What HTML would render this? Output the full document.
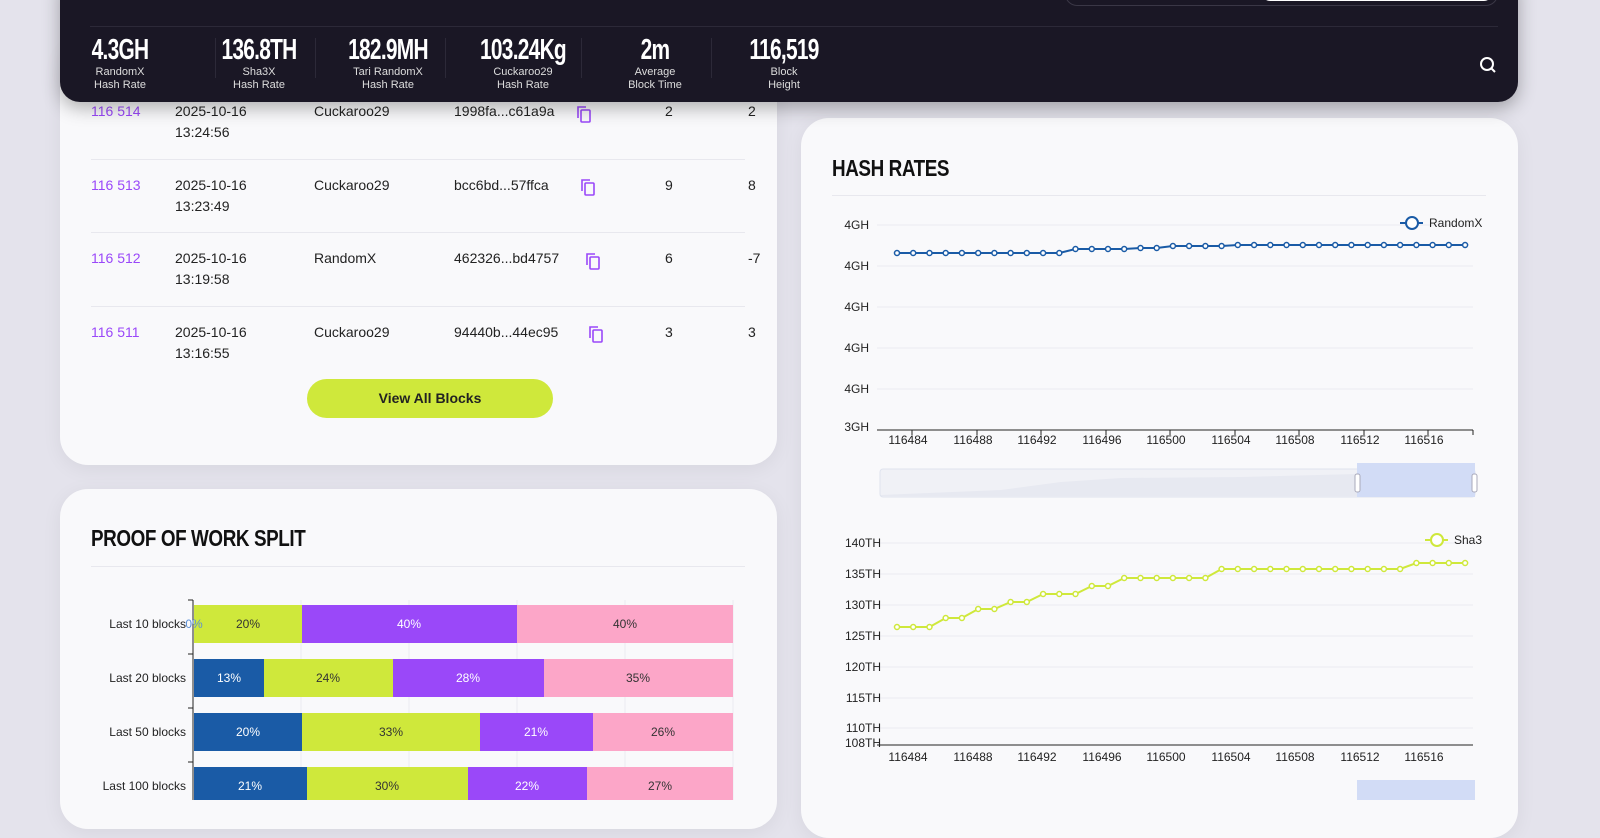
<!DOCTYPE html>
<html><head><meta charset="utf-8"><style>
*{margin:0;padding:0;box-sizing:border-box}
body{width:1600px;height:800px;overflow:hidden;background:#e4e3ec;font-family:"Liberation Sans",sans-serif;position:relative}
.card{position:absolute;background:#f9f9fb;border-radius:28px;box-shadow:0 4px 20px rgba(0,0,0,.06)}
.hdr{position:absolute;left:60px;top:-20px;width:1458px;height:122px;background:#1a1725;border-radius:0 0 20px 20px;box-shadow:0 6px 18px rgba(0,0,0,.3)}
.stat{position:absolute;top:56px;text-align:center;color:#fff;width:130px}
.stat b{display:block;font-family:"Liberation Sans",sans-serif;font-weight:bold;font-size:29px;letter-spacing:-1px;transform:scaleX(.72);line-height:28px;white-space:nowrap}
.stat span{display:block;font-size:11px;line-height:13px;color:#ddd;margin-top:2px}
.sep{position:absolute;top:58px;width:1px;height:40px;background:#2c2938}
.row{position:absolute;left:91px;width:680px;height:45px;font-size:14px;color:#222;line-height:21px;white-space:nowrap}
.row .id{position:absolute;left:0;color:#9a48f9}
.row .d{position:absolute;left:84px}
.row .a{position:absolute;left:223px}
.row .h{position:absolute;left:363px}
.row .n1{position:absolute;left:574px}
.row .n2{position:absolute;left:657px}
.line{position:absolute;left:91px;width:654px;height:1px;background:#e8e8ee}
h2{position:absolute;font-size:23px;font-weight:bold;letter-spacing:-.5px;transform:scaleX(.82);transform-origin:left;color:#111;white-space:nowrap}
</style></head><body>
<div class="card" style="left:60px;top:40px;width:717px;height:425px"></div>
<div class="card" style="left:60px;top:489px;width:717px;height:340px"></div>
<div class="card" style="left:801px;top:118px;width:717px;height:720px"></div>

<div class="row" style="top:101px"><span class="id">116 514</span><span class="d">2025-10-16<br>13:24:56</span><span class="a">Cuckaroo29</span><span class="h">1998fa...c61a9a</span><span class="n1">2</span><span class="n2">2</span></div>
<div class="line" style="top:159px"></div>
<div class="row" style="top:175px"><span class="id">116 513</span><span class="d">2025-10-16<br>13:23:49</span><span class="a">Cuckaroo29</span><span class="h">bcc6bd...57ffca</span><span class="n1">9</span><span class="n2">8</span></div>
<div class="line" style="top:232px"></div>
<div class="row" style="top:248px"><span class="id">116 512</span><span class="d">2025-10-16<br>13:19:58</span><span class="a">RandomX</span><span class="h">462326...bd4757</span><span class="n1">6</span><span class="n2">-7</span></div>
<div class="line" style="top:306px"></div>
<div class="row" style="top:322px"><span class="id">116 511</span><span class="d">2025-10-16<br>13:16:55</span><span class="a">Cuckaroo29</span><span class="h">94440b...44ec95</span><span class="n1">3</span><span class="n2">3</span></div>
<svg style="position:absolute;left:0;top:0" width="800" height="360">
<g fill="none" stroke="#9a48f9" stroke-width="1.6">
<rect x="581" y="110" width="9" height="12" rx="1"/><path d="M578 118V107h8"/>
<rect x="585" y="183" width="9" height="12" rx="1"/><path d="M582 191V180h8"/>
<rect x="590" y="257" width="9" height="12" rx="1"/><path d="M587 265V254h8"/>
<rect x="593" y="330" width="9" height="12" rx="1"/><path d="M590 338V327h8"/>
</g></svg>
<div style="position:absolute;left:307px;top:379px;width:246px;height:39px;border-radius:20px;background:#cfe83b;text-align:center;line-height:39px;font-size:14px;font-weight:bold;color:#222">View All Blocks</div>

<h2 style="left:91px;top:525px">PROOF OF WORK SPLIT</h2>
<div class="line" style="top:566px"></div>
<svg style="position:absolute;left:60px;top:580px" width="717" height="220" font-family="Liberation Sans" font-size="12">
<g stroke="#ececf2"><line x1="241" y1="20" x2="241" y2="220"/><line x1="349" y1="20" x2="349" y2="220"/><line x1="457" y1="20" x2="457" y2="220"/><line x1="565" y1="20" x2="565" y2="220"/><line x1="673" y1="20" x2="673" y2="220"/></g>
<line x1="133" y1="20" x2="133" y2="220" stroke="#222"/>
<g stroke="#222"><line x1="128" y1="20" x2="133" y2="20"/><line x1="128" y1="74" x2="133" y2="74"/><line x1="128" y1="128" x2="133" y2="128"/><line x1="128" y1="182" x2="133" y2="182"/></g>
<g>
<rect x="134" y="25" width="108" height="38" fill="#cfe83b"/><rect x="242" y="25" width="215" height="38" fill="#9a48f9"/><rect x="457" y="25" width="216" height="38" fill="#fca6c8"/>
<rect x="134" y="79" width="70" height="38" fill="#1a5ba6"/><rect x="204" y="79" width="129" height="38" fill="#cfe83b"/><rect x="333" y="79" width="151" height="38" fill="#9a48f9"/><rect x="484" y="79" width="189" height="38" fill="#fca6c8"/>
<rect x="134" y="133" width="108" height="38" fill="#1a5ba6"/><rect x="242" y="133" width="178" height="38" fill="#cfe83b"/><rect x="420" y="133" width="113" height="38" fill="#9a48f9"/><rect x="533" y="133" width="140" height="38" fill="#fca6c8"/>
<rect x="134" y="187" width="113" height="38" fill="#1a5ba6"/><rect x="247" y="187" width="161" height="38" fill="#cfe83b"/><rect x="408" y="187" width="119" height="38" fill="#9a48f9"/><rect x="527" y="187" width="146" height="38" fill="#fca6c8"/>
</g>
<g text-anchor="end" fill="#222"><text x="126" y="48">Last 10 blocks</text><text x="126" y="102">Last 20 blocks</text><text x="126" y="156">Last 50 blocks</text><text x="126" y="210">Last 100 blocks</text></g>
<g text-anchor="middle" fill="#333">
<text x="134" y="48" fill="#5a8fd6">0%</text><text x="188" y="48">20%</text><text x="349" y="48" fill="#fff">40%</text><text x="565" y="48">40%</text>
<text x="169" y="102" fill="#fff">13%</text><text x="268" y="102">24%</text><text x="408" y="102" fill="#fff">28%</text><text x="578" y="102">35%</text>
<text x="188" y="156" fill="#fff">20%</text><text x="331" y="156">33%</text><text x="476" y="156" fill="#fff">21%</text><text x="603" y="156">26%</text>
<text x="190" y="210" fill="#fff">21%</text><text x="327" y="210">30%</text><text x="467" y="210" fill="#fff">22%</text><text x="600" y="210">27%</text>
</g></svg>

<h2 style="left:832px;top:155px">HASH RATES</h2>
<div class="line" style="left:832px;top:195px"></div>
<svg style="position:absolute;left:801px;top:200px" width="717" height="600" font-family="Liberation Sans" font-size="12" fill="#222">
<g stroke="#ececf2"><line x1="76" y1="25" x2="672" y2="25"/><line x1="76" y1="66" x2="672" y2="66"/><line x1="76" y1="107" x2="672" y2="107"/><line x1="76" y1="148" x2="672" y2="148"/><line x1="76" y1="189" x2="672" y2="189"/></g>
<line x1="76" y1="230" x2="672" y2="230" stroke="#222"/>
<g text-anchor="end"><text x="68" y="29">4GH</text><text x="68" y="70">4GH</text><text x="68" y="111">4GH</text><text x="68" y="152">4GH</text><text x="68" y="193">4GH</text><text x="68" y="231">3GH</text></g>
<g text-anchor="middle"><text x="107" y="244">116484</text><text x="172" y="244">116488</text><text x="236" y="244">116492</text><text x="301" y="244">116496</text><text x="365" y="244">116500</text><text x="430" y="244">116504</text><text x="494" y="244">116508</text><text x="559" y="244">116512</text><text x="623" y="244">116516</text></g>
<g stroke="#222"><line x1="111" y1="230" x2="111" y2="235"/><line x1="176" y1="230" x2="176" y2="235"/><line x1="240" y1="230" x2="240" y2="235"/><line x1="305" y1="230" x2="305" y2="235"/><line x1="369" y1="230" x2="369" y2="235"/><line x1="434" y1="230" x2="434" y2="235"/><line x1="498" y1="230" x2="498" y2="235"/><line x1="563" y1="230" x2="563" y2="235"/><line x1="627" y1="230" x2="627" y2="235"/><line x1="672" y1="230" x2="672" y2="235"/></g>
<path id="rx" fill="none" stroke="#1a5ba6" stroke-width="2"/>
<g id="rxp" fill="#fff" stroke="#1a5ba6" stroke-width="1.5"></g>
<line x1="599" y1="23" x2="622" y2="23" stroke="#1a5ba6" stroke-width="2"/><circle cx="611" cy="23" r="6" fill="#fff" stroke="#1a5ba6" stroke-width="2"/><text x="628" y="27">RandomX</text>
<rect x="79" y="269" width="595" height="28" rx="3" fill="#f0f1f6" stroke="#dfe3ee"/>
<path d="M80 295 L200 290 L260 282 L320 278 L440 277 L556 274 L556 296 L80 296Z" fill="#e7e9f1"/>
<rect x="556" y="263" width="118" height="34" fill="#d2dcf6"/>
<rect x="554" y="274" width="5" height="18" rx="2" fill="#fff" stroke="#aab"/><rect x="671" y="274" width="5" height="18" rx="2" fill="#fff" stroke="#aab"/>
<g stroke="#ececf2"><line x1="76" y1="343" x2="672" y2="343"/><line x1="76" y1="374" x2="672" y2="374"/><line x1="76" y1="405" x2="672" y2="405"/><line x1="76" y1="436" x2="672" y2="436"/><line x1="76" y1="467" x2="672" y2="467"/><line x1="76" y1="498" x2="672" y2="498"/><line x1="76" y1="528" x2="672" y2="528"/></g>
<line x1="76" y1="545" x2="672" y2="545" stroke="#222"/>
<g text-anchor="end"><text x="80" y="347">140TH</text><text x="80" y="378">135TH</text><text x="80" y="409">130TH</text><text x="80" y="440">125TH</text><text x="80" y="471">120TH</text><text x="80" y="502">115TH</text><text x="80" y="532">110TH</text><text x="80" y="547">108TH</text></g>
<g text-anchor="middle"><text x="107" y="561">116484</text><text x="172" y="561">116488</text><text x="236" y="561">116492</text><text x="301" y="561">116496</text><text x="365" y="561">116500</text><text x="430" y="561">116504</text><text x="494" y="561">116508</text><text x="559" y="561">116512</text><text x="623" y="561">116516</text></g>
<path id="sh" fill="none" stroke="#cfe83b" stroke-width="2"/>
<g id="shp" fill="#fff" stroke="#cfe83b" stroke-width="1.5"></g>
<line x1="624" y1="340" x2="647" y2="340" stroke="#cfe83b" stroke-width="2"/><circle cx="636" cy="340" r="6" fill="#fff" stroke="#cfe83b" stroke-width="2"/><text x="653" y="344">Sha3</text>
<rect x="556" y="580" width="118" height="20" fill="#d2dcf6"/>
</svg>

<div class="hdr">
<div style="position:absolute;left:30px;top:46px;right:20px;height:1px;background:#2c2938"></div>
<div style="position:absolute;left:1005px;top:-10px;width:433px;height:36px;border:1px solid #3a3746;border-radius:12px"></div>
<div style="position:absolute;left:1202px;top:-10px;width:230px;height:31px;background:#fff;border-radius:8px"></div>
<div class="stat" style="left:-5px"><b>4.3GH</b><span>RandomX<br>Hash Rate</span></div>
<div class="sep" style="left:155px"></div>
<div class="stat" style="left:134px"><b>136.8TH</b><span>Sha3X<br>Hash Rate</span></div>
<div class="sep" style="left:255px"></div>
<div class="stat" style="left:263px"><b>182.9MH</b><span>Tari RandomX<br>Hash Rate</span></div>
<div class="sep" style="left:385px"></div>
<div class="stat" style="left:398px"><b>103.24Kg</b><span>Cuckaroo29<br>Hash Rate</span></div>
<div class="sep" style="left:521px"></div>
<div class="stat" style="left:530px"><b>2m</b><span>Average<br>Block Time</span></div>
<div class="sep" style="left:651px"></div>
<div class="stat" style="left:659px"><b>116,519</b><span>Block<br>Height</span></div>
<svg style="position:absolute;left:1418px;top:75px" width="20" height="20"><circle cx="9" cy="9" r="6" fill="none" stroke="#fff" stroke-width="2"/><path d="M13 13l4 4" stroke="#fff" stroke-width="2"/></svg>
</div>
<script>
function pts(ys,pid,gid){var d='',g='';for(var i=0;i<ys.length;i++){var x=96+i*16.23;d+=(i?'L':'M')+x.toFixed(1)+' '+ys[i];g+='<circle cx="'+x.toFixed(1)+'" cy="'+ys[i]+'" r="2.5"/>';}
document.getElementById(pid).setAttribute('d',d);document.getElementById(gid).innerHTML=g;}
var rx=[];for(var i=0;i<36;i++){rx.push(i<11?53:i<15?49:i<17?48:i<21?46:45);}
pts(rx,'rx','rxp');
var s=[427,427,427,418,418,409,409,402,402,394,394,394,386,386,378,378,378,378,378,378,369,369,369,369,369,369,369,369,369,369,369,369,363,363,363,363];
pts(s,'sh','shp');
</script>
</body></html>
